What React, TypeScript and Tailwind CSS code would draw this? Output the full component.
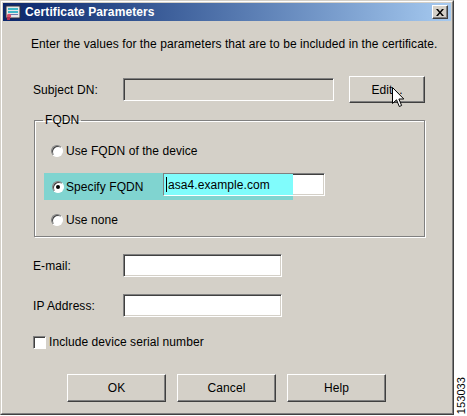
import type { ReactNode } from 'react'

const sunken =
  'border border-t-[#808080] border-l-[#808080] border-r-white border-b-white shadow-[inset_1px_1px_0_#404040,inset_-1px_-1px_0_#d4d0c8]'
const raised =
  'border border-t-white border-l-white border-r-[#404040] border-b-[#404040] shadow-[inset_-1px_-1px_0_#808080]'

function Radio({ checked }: { checked?: boolean }) {
  return (
    <span className="relative flex h-[12px] w-[12px] shrink-0 items-center justify-center rounded-full border border-t-[#808080] border-l-[#808080] border-r-white border-b-white bg-white shadow-[inset_1px_1px_0_#404040]">
      {checked && <span className="h-[4px] w-[4px] rounded-full bg-black" />}
    </span>
  )
}

function Button({ children, className = '' }: { children: ReactNode; className?: string }) {
  return (
    <div className={`relative flex items-center justify-center bg-[#d4d0c8] ${raised} ${className}`}>
      {children}
    </div>
  )
}

function Field({ label, mt }: { label: string; mt: string }) {
  return (
    <div className={`ml-[30px] flex items-center ${mt}`}>
      <span className="w-[90px]">{label}</span>
      <div className={`h-[23px] w-[159px] bg-white ${sunken}`} />
    </div>
  )
}

function TitleIcon() {
  return (
    <svg width="16" height="16" viewBox="0 0 16 16" className="shrink-0">
      <rect x="1" y="2" width="14" height="12" fill="#e8e8e8" stroke="#30303a" strokeWidth="1" />
      <rect x="3" y="4" width="10" height="2" fill="#3fb8c8" />
      <rect x="3" y="7" width="10" height="2" fill="#3fb8c8" />
      <rect x="5" y="10" width="8" height="1" fill="#6a7ab0" />
      <circle cx="4" cy="12" r="2.2" fill="#d8506a" />
      <rect x="2" y="13" width="3" height="3" fill="#b03050" />
    </svg>
  )
}

function Cursor() {
  return (
    <svg width="13" height="21" viewBox="0 0 13 21" className="absolute left-[42px] top-[10px]">
      <path
        d="M0.5 0.5 L0.5 16.5 L4.5 12.8 L7.3 19.5 L9.6 18.5 L6.9 12 L11.8 12 Z"
        fill="#fff"
        stroke="#000"
        strokeWidth="1"
        strokeLinejoin="miter"
      />
    </svg>
  )
}

export default function App() {
  return (
    <div className="flex h-[416px] w-[467px] bg-white text-[12px] leading-[14px] tracking-[0.07px] text-black [font-family:'Liberation_Sans',Arial,sans-serif]">
      <div className="flex h-[415px] w-[454px] shrink-0 flex-col border border-t-[#d4d0c8] border-l-[#d4d0c8] border-r-[#404040] border-b-[#404040] bg-[#d4d0c8]">
        <div className="flex flex-1 flex-col border border-t-white border-l-white border-r-[#808080] border-b-[#808080] p-px">
          {/* title bar */}
          <div className="flex h-[18px] items-center bg-gradient-to-r from-[#0a246a] to-[#a6caf0] pl-[2px] pr-[3px]">
            <TitleIcon />
            <span className="ml-[4px] text-[12px] font-bold tracking-[0.1px] text-white">Certificate Parameters</span>
            <div
              className={`ml-auto flex h-[14px] w-[16px] items-center justify-center bg-[#d4d0c8] ${raised}`}
            >
              <svg width="8" height="7" viewBox="0 0 8 7">
                <path d="M0 0h2l2 2.5L6 0h2L5 3.5 8 7H6L4 4.5 2 7H0l3-3.5z" fill="#000" />
              </svg>
            </div>
          </div>

          {/* intro */}
          <p className="ml-[28px] mt-[16px]">
            Enter the values for the parameters that are to be included in the certificate.
          </p>

          {/* Subject DN */}
          <div className="ml-[30px] mt-[25px] flex h-[27px] items-center">
            <span className="w-[90px]">Subject DN:</span>
            <div className={`h-[23px] w-[211px] bg-[#d4d0c8] ${sunken}`} />
            <Button className="ml-[15px] h-[27px] w-[76px]">
              <span>Edit...</span>
              <Cursor />
            </Button>
          </div>

          {/* FQDN group */}
          <fieldset className="ml-[31px] mt-[10px] w-[391px] border border-[#808080] pb-[9px] shadow-[inset_1px_1px_0_#fff,1px_1px_0_#fff]">
            <legend className="ml-[8px] px-[2px]">FQDN</legend>
            <div className="ml-[16px] mt-[17px] flex items-center gap-[3px]">
              <Radio />
              <span>Use FQDN of the device</span>
            </div>

            <div className="ml-[9px] mt-[15px] flex h-[27px]">
              <div className="flex w-[119px] items-center gap-[2px] bg-[#80d4d0] pl-[8px]">
                <Radio checked />
                <span>Specify FQDN</span>
              </div>
              <div className="flex flex-col">
                <div className={`flex h-[23px] w-[162px] bg-white ${sunken}`}>
                  <div className="flex w-[129px] items-center bg-[#80fcfc] pl-[2px]">
                    <span className="h-[15px] w-px bg-black" />
                    <span className="ml-px">asa4.example.com</span>
                  </div>
                </div>
                <div className="h-[4px] w-[130px] bg-[#80d4d0]" />
              </div>
            </div>

            <div className="ml-[16px] mt-[13px] flex items-center gap-[3px]">
              <Radio />
              <span>Use none</span>
            </div>
          </fieldset>

          <Field label="E-mail:" mt="mt-[17px]" />
          <Field label="IP Address:" mt="mt-[17px]" />

          {/* checkbox */}
          <div className="ml-[30px] mt-[18px] flex items-center gap-[3px]">
            <span className="h-[13px] w-[13px] border border-t-[#808080] border-l-[#808080] border-r-white border-b-white bg-white shadow-[inset_1px_1px_0_#404040]" />
            <span>Include device serial number</span>
          </div>

          {/* buttons */}
          <div className="ml-[64px] mt-[25px] flex gap-[11px]">
            <Button className="h-[28px] w-[99px]">OK</Button>
            <Button className="h-[28px] w-[99px]">Cancel</Button>
            <Button className="h-[28px] w-[99px]">Help</Button>
          </div>
        </div>
      </div>

      {/* figure number strip */}
      <div className="flex flex-1 flex-col justify-end pb-[2px] pl-[2px]">
        <span className="rotate-180 text-[11px] leading-[11px] [writing-mode:vertical-rl]">153033</span>
      </div>
    </div>
  )
}
